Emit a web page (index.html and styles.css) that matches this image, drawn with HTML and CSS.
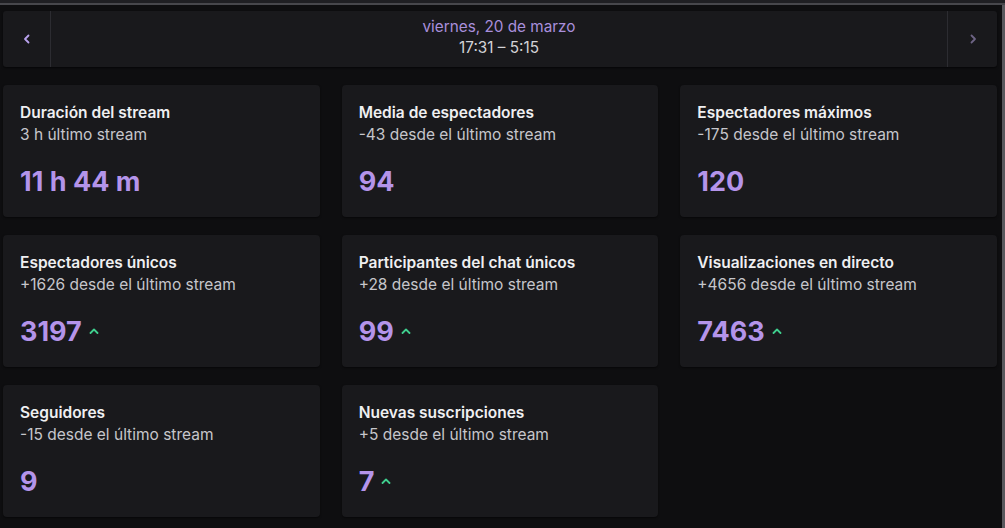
FILE: index.html
```html
<!DOCTYPE html>
<html lang="es">
<head>
    <meta charset="UTF-8" />
    <meta name="viewport" content="width=device-width, initial-scale=1.0" />
    <title>Resumen del stream</title>
    <link rel="stylesheet" href="styles.css">
</head>
<body>
    <div class="top-line"></div>
    <div class="layout">
        <div class="container">
            <div class="session-nav">
                <button class="nav-btn prev" aria-label="Anterior">
                    <svg width="8" height="10" viewBox="0 0 8 10"><path d="M5.5 1.5 2 5l3.5 3.5" fill="none" stroke="currentColor" stroke-width="1.8" stroke-linecap="round" stroke-linejoin="round"/></svg>
                </button>
                <div class="session-info">
                    <div class="session-date">viernes, 20 de marzo</div>
                    <div class="session-time">17:31 – 5:15</div>
                </div>
                <button class="nav-btn next" aria-label="Siguiente">
                    <svg width="8" height="10" viewBox="0 0 8 10"><path d="M2.5 1.5 6 5 2.5 8.5" fill="none" stroke="currentColor" stroke-width="1.8" stroke-linecap="round" stroke-linejoin="round"/></svg>
                </button>
            </div>

            <div class="grid">
                <div class="card">
                    <div class="card-title">Duración del stream</div>
                    <div class="card-sub">3 h último stream</div>
                    <div class="card-value">11 h 44 m</div>
                </div>
                <div class="card">
                    <div class="card-title">Media de espectadores</div>
                    <div class="card-sub">-43 desde el último stream</div>
                    <div class="card-value">94</div>
                </div>
                <div class="card">
                    <div class="card-title">Espectadores máximos</div>
                    <div class="card-sub">-175 desde el último stream</div>
                    <div class="card-value">120</div>
                </div>
                <div class="card">
                    <div class="card-title">Espectadores únicos</div>
                    <div class="card-sub">+1626 desde el último stream</div>
                    <div class="card-value">3197 <span class="trend-up"><svg width="10" height="6" viewBox="0 0 10 6"><path d="M1.5 5 5 1.5 8.5 5" fill="none" stroke="currentColor" stroke-width="1.8" stroke-linecap="round" stroke-linejoin="round"/></svg></span></div>
                </div>
                <div class="card">
                    <div class="card-title">Participantes del chat únicos</div>
                    <div class="card-sub">+28 desde el último stream</div>
                    <div class="card-value">99 <span class="trend-up"><svg width="10" height="6" viewBox="0 0 10 6"><path d="M1.5 5 5 1.5 8.5 5" fill="none" stroke="currentColor" stroke-width="1.8" stroke-linecap="round" stroke-linejoin="round"/></svg></span></div>
                </div>
                <div class="card">
                    <div class="card-title">Visualizaciones en directo</div>
                    <div class="card-sub">+4656 desde el último stream</div>
                    <div class="card-value">7463 <span class="trend-up"><svg width="10" height="6" viewBox="0 0 10 6"><path d="M1.5 5 5 1.5 8.5 5" fill="none" stroke="currentColor" stroke-width="1.8" stroke-linecap="round" stroke-linejoin="round"/></svg></span></div>
                </div>
                <div class="card">
                    <div class="card-title">Seguidores</div>
                    <div class="card-sub">-15 desde el último stream</div>
                    <div class="card-value">9</div>
                </div>
                <div class="card">
                    <div class="card-title">Nuevas suscripciones</div>
                    <div class="card-sub">+5 desde el último stream</div>
                    <div class="card-value">7 <span class="trend-up"><svg width="10" height="6" viewBox="0 0 10 6"><path d="M1.5 5 5 1.5 8.5 5" fill="none" stroke="currentColor" stroke-width="1.8" stroke-linecap="round" stroke-linejoin="round"/></svg></span></div>
                </div>
            </div>
        </div>
        <div class="scrollbar"></div>
    </div>
</body>
</html>
```

FILE: styles.css
```css
* {
    box-sizing: border-box;
    margin: 0;
    padding: 0;
    font-family: Inter, 'Noto Sans', sans-serif;
}

body {
    background: #0e0e10;
    color: #efeff1;
    height: 528px;
    overflow: hidden;
}

.top-line {
    height: 5px;
    background: #1f1f23;
    border-bottom: 2px solid #47474c;
}

.layout {
    display: flex;
    height: 523px;
}

.container {
    flex: 1;
    padding: 6px 5px 0 3px;
}

.scrollbar {
    width: 3px;
    background: #58585d;
}

.session-nav {
    display: flex;
    height: 56px;
    background: #19191c;
    border-radius: 3px;
    box-shadow: 0 1px 2px rgba(0, 0, 0, 0.6);
}

.nav-btn {
    width: 48px;
    background: none;
    border: none;
    display: flex;
    align-items: center;
    justify-content: center;
    cursor: pointer;
}

.nav-btn.prev {
    color: #b9a2ee;
    border-right: 1px solid #2c2c31;
}

.nav-btn.next {
    width: 50px;
    color: #6e6485;
    border-left: 1px solid #2c2c31;
}

.session-info {
    flex: 1;
    text-align: center;
    font-size: 15.3px;
    line-height: 21px;
    padding-top: 5px;
}

.session-date {
    color: #a98fdc;
}

.session-time {
    color: #d3d3d7;
}

.grid {
    display: grid;
    grid-template-columns: repeat(3, 1fr);
    column-gap: 22px;
    row-gap: 18px;
    margin-top: 18px;
}

.card {
    background: #19191c;
    border-radius: 4px;
    height: 132px;
    padding: 18px 17px 17px;
    box-shadow: 0 1px 2px rgba(0, 0, 0, 0.5);
}

.card-title {
    font-size: 15.5px;
    font-weight: 600;
    line-height: 20px;
    color: #efeff1;
}

.card-sub {
    font-size: 15.5px;
    line-height: 24px;
    color: #c6c6cb;
}

.card-value {
    margin-top: 19px;
    font-size: 27px;
    font-weight: 700;
    line-height: 32px;
    color: #b494ea;
    display: flex;
    align-items: center;
    gap: 7px;
}

.trend-up {
    display: inline-flex;
    color: #3fcf8e;
    margin-top: -3px;
}
```
